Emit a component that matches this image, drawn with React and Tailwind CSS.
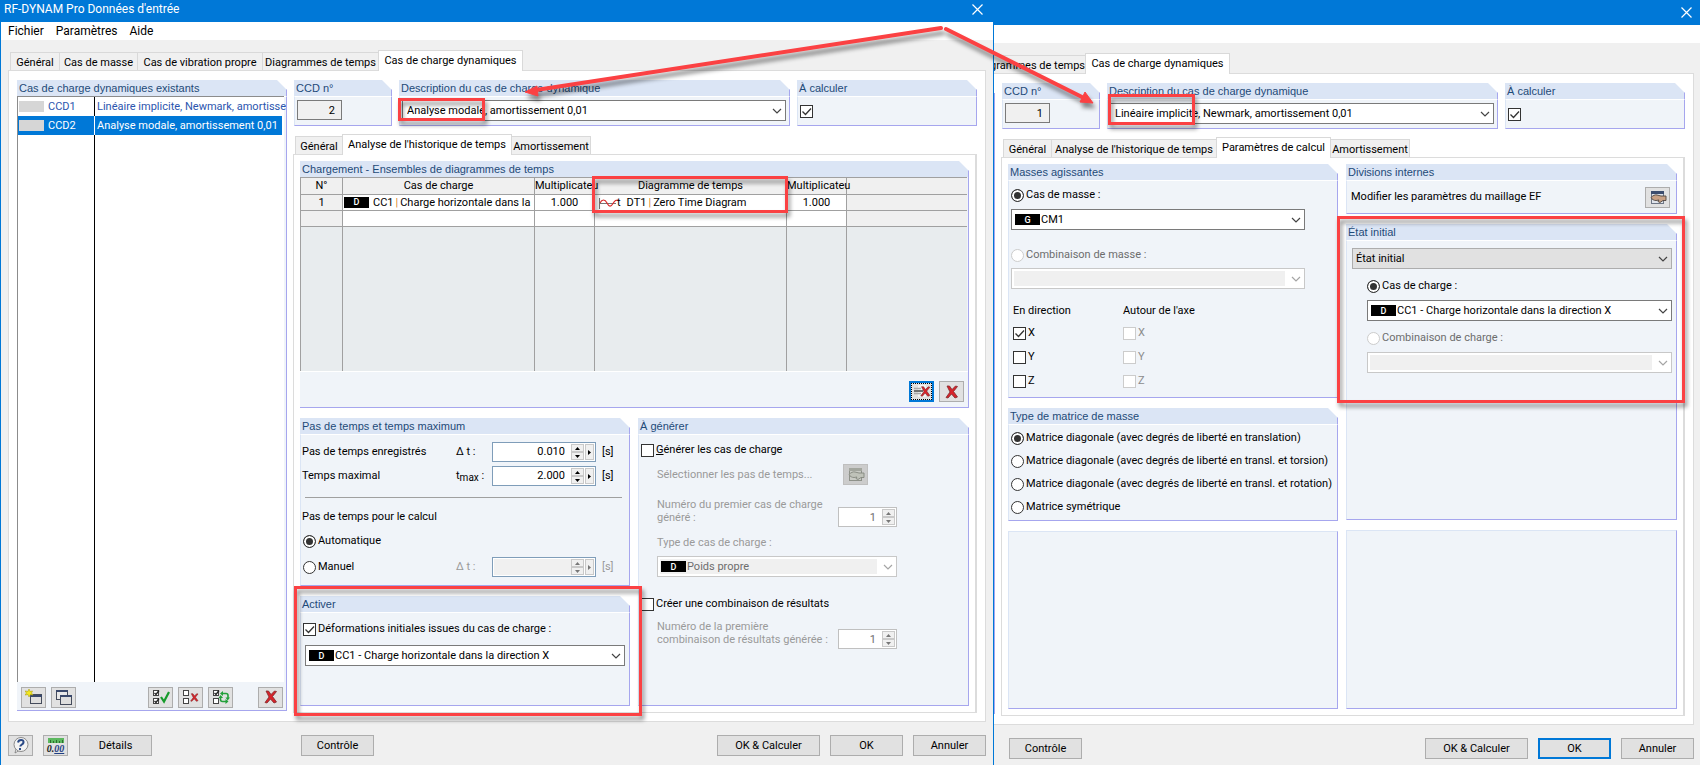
import React from "react";
import clsx from "clsx";

const CASES = [
    { id: "CCD1", label: "Linéaire implicite, Newmark, amortisse" },
    { id: "CCD2", label: "Analyse modale, amortissement 0,01", selected: true },
];

const MASS_MATRICES = [
    "Matrice diagonale (avec degrés de liberté en translation)",
    "Matrice diagonale (avec degrés de liberté en transl. et torsion)",
    "Matrice diagonale (avec degrés de liberté en transl. et rotation)",
    "Matrice symétrique",
];

/* ---------- Icons ---------- */

function RedCross({ x = 0, y = 0, size = 14 }) {
    return (
        <svg x={x} y={y} width={size} height={size} viewBox="0 0 14 14">
            <path d="M2 1L4.500 1L7 4.500L10.500 1L12.500 1.500L8.500 6.500L12.500 12L10 13L6.500 9L3 13L1 12.500L5 7Z" fill="#d8232a" stroke="#7d2a2c" strokeWidth=".8" />
        </svg>
    );
}

function MiniBox({ x, y, checked }) {
    return (
        <g>
            <rect x={x + 0.5} y={y + 0.5} width="5" height="5" fill="#fff" stroke="#444" />
            {checked && <path d={`M${x + 1.5} ${y + 3}l1.500 1.500l3-4`} fill="none" stroke="#222" strokeWidth="1.300" />}
        </g>
    );
}

function NewIcon() {
    return (
        <svg width="18" height="16" viewBox="0 0 18 16">
            <rect x="5.500" y="5.500" width="11" height="9" fill="#dedede" stroke="#444b5c" />
            <path d="M5 6h12v2H5z" fill="#39486b" />
            <path d="M4 0l1 2.500L7.500 2L6.500 4L8 6L5.500 5.500L4 8L3 5.500L0 6L1.500 4L0 2l3 .5z" fill="#f4e81c" stroke="#b1a410" strokeWidth=".6" />
        </svg>
    );
}

function CopyIcon() {
    return (
        <svg width="18" height="17" viewBox="0 0 18 17">
            <rect x="1.500" y="1.500" width="11" height="9" fill="#e8e8e8" stroke="#444b5c" />
            <path d="M1 1h12v2H1z" fill="#39486b" />
            <rect x="5.500" y="6.500" width="11" height="9" fill="#dedede" stroke="#444b5c" />
            <path d="M5 6h12v2H5z" fill="#39486b" />
        </svg>
    );
}

function CheckAllIcon() {
    return (
        <svg width="18" height="15" viewBox="0 0 18 15">
            <MiniBox x={1} y={0} checked />
            <MiniBox x={1} y={8} checked />
            <path d="M9 7l3 4.500L17 2" fill="none" stroke="#169b2b" strokeWidth="2.200" />
        </svg>
    );
}

function UncheckAllIcon() {
    return (
        <svg width="18" height="15" viewBox="0 0 18 15">
            <MiniBox x={1} y={0} />
            <MiniBox x={1} y={8} />
            <RedCross x={8} y={3} size={9} />
        </svg>
    );
}

function InvertIcon() {
    return (
        <svg width="18" height="15" viewBox="0 0 18 15">
            <MiniBox x={1} y={0} checked />
            <MiniBox x={1} y={8} />
            <path d="M10 3.500h4q2 0 2 2v3M14.500 11.500h-4q-2 0-2-2V7" fill="none" stroke="#23a03a" strokeWidth="1.600" />
            <path d="M13.500 7.500h4.500l-2.300 3zM6.500 8H11L8.700 5zM11 1v5L8 3.500zM13.500 9v5l3-2.500z" fill="#23a03a" />
        </svg>
    );
}

function DeleteRowIcon() {
    return (
        <svg width="18" height="15" viewBox="0 0 18 15">
            <path d="M5 1h8v12H5z" fill="#f4f4f4" />
            <path d="M1 4.500h7M1 9.500h7" stroke="#a9a9a9" strokeWidth="1.500" />
            <path d="M1 7h9" stroke="#6f6f6f" strokeWidth="2" />
            <RedCross x={7} y={2} size={11} />
        </svg>
    );
}

function EditIcon({ muted }) {
    return (
        <svg width="18" height="15" viewBox="0 0 18 15">
            <rect x="2.500" y="1.500" width="12" height="12" fill={muted ? "#c9cbc5" : "#dfe4ec"} stroke={muted ? "#8e918a" : "#6d7686"} />
            <path d="M2 1h13v3H2z" fill={muted ? "#a3a69e" : "#3c4d6e"} />
            <path
                d="M2 7.500C4 5.500 6 4.500 8 5l4 1h5v4.500h-3L11 12.500L9 11.500l1-1.500l-3 .5C5 10.500 3 9.500 2 7.500z"
                fill={muted ? "#bfc2b9" : "#c9a184"}
                stroke={muted ? "#85887f" : "#4f4640"}
                strokeWidth=".9"
            />
        </svg>
    );
}

function HelpIcon() {
    return (
        <svg width="18" height="17" viewBox="0 0 18 17">
            <path d="M4 12l-1 4l4-2.500z" fill="#fff" stroke="#777" strokeWidth=".8" />
            <circle cx="9" cy="7.500" r="7" fill="#f3f3f3" stroke="#8b8b8b" />
            <path d="M6 5.500C6.500 2 12 2 11.500 5.500C11.200 7.500 8.500 7.500 8.300 9.500M8 11v2" fill="none" stroke="#2b4a86" strokeWidth="2" />
        </svg>
    );
}

function DecimalsIcon() {
    return (
        <span className="flex flex-col items-center">
            <svg width="16" height="5" viewBox="0 0 16 5">
                <path d="M0 0h16v5H0z" fill="#5cb85f" />
                <path d="M2.500 2v3M5.500 3v2M8.500 2v3M11.500 3v2M14.500 2v3" stroke="#2c6e2f" />
            </svg>
            <span className="font-['Liberation_Serif',serif] text-[10px] font-bold italic leading-[11px] text-[#1c1c1c]">
                0.<span className="text-[#1f3f83] underline">00</span>
            </span>
        </span>
    );
}

function WaveIcon() {
    return (
        <svg width="21" height="12" viewBox="0 0 21 12" className="shrink-0">
            <path d="M1.500 1v11M1 6.500h17" stroke="#777" />
            <path d="M2 6C4 2 7 2 9 6S13 10 15 6.500S18 3 20 3" fill="none" stroke="#d92b2b" strokeWidth="1.200" />
        </svg>
    );
}

function Chevron({ muted }) {
    return (
        <svg
            width="10"
            height="6"
            viewBox="0 0 10 6"
            className={clsx("pointer-events-none absolute right-1 top-1/2 -translate-y-1/2", muted ? "text-[#a5a5a5]" : "text-[#444]")}
        >
            <path d="M1 1l4 4l4-4" fill="none" stroke="currentColor" strokeWidth="1.200" />
        </svg>
    );
}

/* ---------- Controls ---------- */

function Tab({ active, className, children }) {
    return (
        <button
            role="tab"
            aria-selected={!!active}
            className={clsx(
                "flex shrink-0 items-center justify-center whitespace-nowrap border border-b-0 border-[#d9d9d9]",
                active ? "z-1 -mx-px -mb-px h-[21px] bg-white pb-px" : "h-[18px] bg-[#f0f0f0] pt-0.5",
                className
            )}
        >
            {children}
        </button>
    );
}

function Group({ title, className, bodyClassName, children }) {
    return (
        <section className={clsx("relative flex flex-col", className)}>
            {title && (
                <h2 className="h-4 shrink-0 border-r border-[#a6a6ee] bg-[#dbe5f5] pl-0.5 font-['Liberation_Sans',Arial,sans-serif] text-[11px] leading-4 text-[#1e4a78] [clip-path:polygon(0_0,calc(100%-10px)_0,100%_10px,100%_100%,0_100%)]">
                    {title}
                </h2>
            )}
            <div
                className={clsx(
                    "flex flex-1 flex-col border border-b-[#a6a6ee] border-l-[#dbe5f5] border-r-[#a6a6ee] bg-[#f0f4f9]",
                    title ? "border-t-white" : "border-t-[#dbe5f5]",
                    bodyClassName
                )}
            >
                {children}
            </div>
        </section>
    );
}

function Badge({ children, className }) {
    return (
        <span className={clsx("flex h-[11px] w-[25px] shrink-0 items-center justify-center bg-black text-[9px] font-medium text-white", className)}>
            {children}
        </span>
    );
}

function Select({ label, value = "", badge, disabled, face, className }) {
    return (
        <div className={clsx("relative h-[21px]", className)}>
            <select
                aria-label={label}
                disabled={disabled}
                className={clsx(
                    "block h-full w-full appearance-none border pr-5",
                    badge ? "pl-[29px]" : "pl-[3px]",
                    disabled &&
                        "border-[#c8c8c8] bg-[#f0f0f0] text-[#6d6d6d] opacity-100 shadow-[inset_2px_0_0_white,inset_-19px_0_0_white,inset_0_2px_0_white,inset_0_-2px_0_white]",
                    !disabled && (face ? "border-[#adadad] bg-[#e1e1e1]" : "border-[#7a7a7a] bg-white")
                )}
            >
                <option>{value}</option>
            </select>
            {badge && <Badge className="pointer-events-none absolute left-1 top-[5px]">{badge}</Badge>}
            <Chevron muted={disabled} />
        </div>
    );
}

function Checkbox({ label, checked, disabled, ariaLabel, className }) {
    return (
        <label className={clsx("flex h-5 items-center gap-0.5 whitespace-nowrap", disabled && "text-[#8c8c8c]", className)}>
            <span className="relative flex">
                <input
                    type="checkbox"
                    defaultChecked={checked}
                    disabled={disabled}
                    aria-label={ariaLabel}
                    className="peer size-[13px] appearance-none border border-[#333] bg-white disabled:border-[#ccc]"
                />
                <svg
                    width="13"
                    height="13"
                    viewBox="0 0 13 13"
                    className="pointer-events-none absolute inset-0 hidden peer-checked:block"
                >
                    <path d="M2.500 6.500l3 3l5.500-6" fill="none" stroke="#333" strokeWidth="1.300" />
                </svg>
            </span>
            <span>{label}</span>
        </label>
    );
}

function Radio({ name, label, checked, disabled, className }) {
    return (
        <label className={clsx("flex h-5 items-center gap-0.5 whitespace-nowrap", disabled && "text-[#6d6d6d]", className)}>
            <input
                type="radio"
                name={name}
                defaultChecked={checked}
                disabled={disabled}
                className="size-[13px] appearance-none rounded-full border border-[#333] bg-white checked:bg-[#333] checked:shadow-[inset_0_0_0_2px_white] disabled:border-[#ccc]"
            />
            {label}
        </label>
    );
}

function SpinArrows({ muted }) {
    const face = "flex w-[13px] flex-1 items-center justify-center border border-[#c9c9c9] bg-[#f0f0f0]";
    return (
        <span className={clsx("flex w-[13px] flex-col", muted ? "text-[#777]" : "text-black")}>
            <button aria-label="Augmenter" disabled={muted} className={face}>
                <svg width="5" height="3" viewBox="0 0 5 3"><path d="M0 3h5L2.500 0z" fill="currentColor" /></svg>
            </button>
            <button aria-label="Diminuer" disabled={muted} className={face}>
                <svg width="5" height="3" viewBox="0 0 5 3"><path d="M0 0h5L2.500 3z" fill="currentColor" /></svg>
            </button>
        </span>
    );
}

function NumberField({ label, value, disabled, more, className }) {
    return (
        <div
            className={clsx(
                "flex h-5 shrink-0 border bg-white p-px",
                more ? "w-[104px] border-[#7f9db9]" : "w-[59px] border-[#c0c0c0]",
                className
            )}
        >
            <input
                aria-label={label}
                defaultValue={value}
                disabled={disabled}
                className={clsx(
                    "min-w-0 flex-1 pr-1.5 text-right",
                    disabled && "text-[#6d6d6d]",
                    disabled && more && "bg-[#f0f0f0]"
                )}
            />
            <SpinArrows muted={disabled} />
            {more && (
                <button
                    aria-label={`${label} : valeurs`}
                    disabled={disabled}
                    className={clsx(
                        "ml-px flex w-[9px] items-center justify-center border border-[#c9c9c9] bg-[#f0f0f0]",
                        disabled && "text-[#777]"
                    )}
                >
                    <svg width="3" height="5" viewBox="0 0 3 5"><path d="M0 0v5L3 2.500z" fill="currentColor" /></svg>
                </button>
            )}
        </div>
    );
}

function IconButton({ label, focused, disabled, className, children }) {
    return (
        <button
            aria-label={label}
            disabled={disabled}
            className={clsx(
                "flex h-[21px] w-[25px] shrink-0 items-center justify-center",
                focused && "border-2 border-[#0078d7] bg-[#e1e1e1] outline-1 -outline-offset-3 outline-dotted outline-black",
                !focused && (disabled ? "border border-[#bfbfbf] bg-[#cccccc]" : "border border-[#adadad] bg-[#e1e1e1]"),
                className
            )}
        >
            {children}
        </button>
    );
}

function PushButton({ primary, className, children }) {
    return (
        <button
            className={clsx(
                "h-[21px] shrink-0 bg-[#e1e1e1]",
                primary ? "border-2 border-[#0078d7]" : "border border-[#adadad]",
                className || "w-[73px]"
            )}
        >
            {children}
        </button>
    );
}

function Highlight({ className }) {
    return (
        <span
            className={clsx(
                "pointer-events-none absolute z-20 border-3 border-[#fb4143] drop-shadow-[2px_4px_2px_rgba(0,0,0,0.45)]",
                className
            )}
        />
    );
}

function CloseButton({ className }) {
    return (
        <button aria-label="Fermer" className={className}>
            <svg width="11" height="11" viewBox="0 0 11 11">
                <path d="M.5 .5l10 10M10.500 .5l-10 10" stroke="#fff" strokeWidth="1.200" />
            </svg>
        </button>
    );
}

/* ---------- Shared header row of both dialogs ---------- */

function CaseHeader({ number, description, highlight }) {
    return (
        <div className="ml-px flex gap-[7px]">
            <Group title="CCD n°" className="w-[98px]" bodyClassName="min-h-[30px] pl-0.5 pt-[3px]">
                <input
                    aria-label="CCD n°"
                    readOnly
                    value={number}
                    className="h-5 w-[45px] border border-[#7a7a7a] bg-[#f0f0f0] pr-1.5 text-right"
                />
            </Group>
            <Group title="Description du cas de charge dynamique" className="flex-1" bodyClassName="pl-0.5 pr-[3px] pt-[3px]">
                <Select label="Description du cas de charge dynamique" value={description} className="[&>select]:pl-1" />
                <Highlight className={highlight} />
            </Group>
            <Group title="À calculer" className="w-[180px]" bodyClassName="pl-0.5 pt-1">
                <Checkbox ariaLabel="À calculer" checked />
            </Group>
        </div>
    );
}

/* ---------- Left dialog ---------- */

function CaseList() {
    return (
        <Group title="Cas de charge dynamiques existants" className="mb-0.5 w-[270px] shrink-0" bodyClassName="border-l-0!">
            <div className="-mt-px mr-0.5 flex flex-1 flex-col border-l border-t border-[#8c8c8c] bg-white">
                {CASES.map((c) => (
                    <button
                        key={c.id}
                        className={clsx("mr-0.5 grid h-[19px] grid-cols-[77px_1fr] text-left", c.selected ? "bg-[#0078d7] text-white" : "text-[#2b55ae]")}
                    >
                        <span className={clsx("flex h-full items-center gap-1 border-r pl-px", c.selected ? "border-white" : "border-black")}>
                            <span className="h-[11px] w-[25px] bg-[#d6d6d6]" />
                            {c.id}
                        </span>
                        <span className="-mr-1 self-center overflow-hidden whitespace-nowrap pl-0.5">{c.label}</span>
                    </button>
                ))}
                <div className="w-[77px] flex-1 border-r border-black" />
            </div>
            <div className="flex h-7 items-center gap-[5px] pl-1 pr-[3px] pt-0.5">
                <IconButton label="Nouveau"><NewIcon /></IconButton>
                <IconButton label="Copier"><CopyIcon /></IconButton>
                <IconButton label="Tout sélectionner" className="ml-auto"><CheckAllIcon /></IconButton>
                <IconButton label="Tout désélectionner"><UncheckAllIcon /></IconButton>
                <IconButton label="Inverser la sélection"><InvertIcon /></IconButton>
                <IconButton label="Supprimer" className="ml-5"><RedCross /></IconButton>
            </div>
        </Group>
    );
}

function LoadTable() {
    const th = "border-b border-r border-[#a0a0a0] bg-[#f0f0f0] p-0 font-normal whitespace-nowrap";
    const td = "border-b border-r border-[#a0a0a0] bg-white p-0 text-center whitespace-nowrap";
    const fill = "border-r border-[#a0a0a0] bg-[#e8ecee] p-0";
    return (
        <Group title="Chargement - Ensembles de diagrammes de temps" bodyClassName="border-l-0! border-t-0!">
            <div className="relative mr-px">
                <table className="w-full table-fixed border-separate border-spacing-0 border-l border-t border-[#a0a0a0]">
                    <colgroup>
                        <col className="w-[42px]" />
                        <col className="w-[192px]" />
                        <col className="w-[60px]" />
                        <col className="w-[192px]" />
                        <col className="w-[60px]" />
                        <col />
                    </colgroup>
                    <thead>
                        <tr className="h-[17px] leading-4">
                            <th className={th}>N°</th>
                            <th className={th}>Cas de charge</th>
                            <th className={th}>Multiplicateu</th>
                            <th className={th}>Diagramme de temps</th>
                            <th className={th}>Multiplicateu</th>
                            <th className={clsx(th, "border-r-0")} />
                        </tr>
                    </thead>
                    <tbody className="leading-[15px]">
                        <tr className="h-4">
                            <td className={clsx(td, "bg-[#f0f0f0]!")}>1</td>
                            <td className={td}>
                                <span className="flex items-center pl-px">
                                    <Badge className="mr-1">D</Badge>CC1<span className="px-0.5 text-[#d9822b]">|</span>Charge horizontale dans la
                                </span>
                            </td>
                            <td className={td}>1.000</td>
                            <td className={td}>
                                <span className="flex items-center pl-[3px]">
                                    <WaveIcon />
                                    <span className="-ml-0.5 mr-1.5">t</span>DT1<span className="px-0.5 text-[#d9822b]">|</span>Zero Time Diagram
                                </span>
                            </td>
                            <td className={td}>1.000</td>
                            <td className={clsx(td, "border-r-0 bg-[#f0f0f0]!")} />
                        </tr>
                        <tr className="h-4">
                            <td className={clsx(td, "bg-[#f0f0f0]!")} />
                            <td className={td} />
                            <td className={td} />
                            <td className={td} />
                            <td className={td} />
                            <td className={clsx(td, "border-r-0 bg-[#f0f0f0]!")} />
                        </tr>
                        <tr className="h-[144px]">
                            <td className={fill} />
                            <td className={fill} />
                            <td className={fill} />
                            <td className={fill} />
                            <td className={fill} />
                            <td className={clsx(fill, "border-r-0")} />
                        </tr>
                    </tbody>
                </table>
                <Highlight className="left-[292px] -top-px h-[37px] w-[196px]" />
            </div>
            <div className="flex h-9 items-center justify-end gap-[5px] border-t border-white pb-1 pr-1 pt-2">
                <IconButton label="Supprimer la ligne" focused><DeleteRowIcon /></IconButton>
                <IconButton label="Tout supprimer"><RedCross /></IconButton>
            </div>
        </Group>
    );
}

function TimeRow({ label, symbol, value, disabled, className }) {
    return (
        <div className={clsx("flex h-5 items-center", className)}>
            <span className="flex-1">{label}</span>
            <span className={clsx("w-9 shrink-0", disabled && "text-[#9a9a9a]")}>{symbol}</span>
            <NumberField label={typeof label === "string" ? label : "Pas de temps"} value={value} disabled={disabled} more />
            <span className={clsx("w-[33px] shrink-0 pl-1.5", disabled && "text-[#9a9a9a]")}>[s]</span>
        </div>
    );
}

function TimeSteps() {
    return (
        <Group title="Pas de temps et temps maximum" bodyClassName="pb-2 pl-px pt-[7px]">
            <TimeRow label="Pas de temps enregistrés" symbol="Δ t :" value="0.010" />
            <TimeRow
                label="Temps maximal"
                symbol={<>t<sub className="bottom-[-2px] text-[10px]">max</sub> :</>}
                value="2.000"
                className="mt-1"
            />
            <hr className="ml-[3px] mr-[7px] mt-[11px] border-[#a0a0a0]" />
            <div className="mt-[9px] h-5 leading-5">Pas de temps pour le calcul</div>
            <Radio name="step" label="Automatique" checked className="ml-px mt-1" />
            <TimeRow label={<Radio name="step" label="Manuel" className="ml-px" />} symbol="Δ t :" disabled className="mt-1.5" />
        </Group>
    );
}

function Generate() {
    return (
        <Group title="À générer" bodyClassName="pl-0.5 pt-[5px]">
            <Checkbox label={<><u>G</u>énérer les cas de charge</>} />
            <div className="mb-[17px] ml-4 flex w-60 flex-col text-[#9a9a9a]">
                <div className="mt-1 flex h-[21px] items-center justify-between pr-[29px]">
                    Sélectionner les pas de temps...
                    <IconButton label="Sélectionner les pas de temps" disabled><EditIcon muted /></IconButton>
                </div>
                <div className="mt-[13px] flex h-[29px] justify-between leading-[13px]">
                    <span>Numéro du premier cas de charge<br />généré :</span>
                    <NumberField label="Numéro du premier cas de charge généré" value="1" disabled className="self-end" />
                </div>
                <div className="mt-1.5 h-5 leading-5">Type de cas de charge :</div>
                <Select label="Type de cas de charge" value="Poids propre" badge="D" disabled className="mt-[3px]" />
            </div>
            <Checkbox label="Créer une combinaison de résultats" />
            <div className="ml-4 mt-1.5 flex h-[29px] w-60 justify-between whitespace-nowrap leading-[13px] text-[#9a9a9a]">
                <span>Numéro de la première<br />combinaison de résultats générée :</span>
                <NumberField label="Numéro de la première combinaison de résultats générée" value="1" disabled className="self-end" />
            </div>
        </Group>
    );
}

function Activate() {
    return (
        <Group title="Activer" className="h-[110px]" bodyClassName="pl-0.5 pt-1.5">
            <Checkbox label="Déformations initiales issues du cas de charge :" checked />
            <Select label="Cas de charge initial" value="CC1 - Charge horizontale dans la direction X" badge="D" className="ml-0.5 mr-1 mt-1.5" />
            <Highlight className="-bottom-2.5 -left-1.5 -right-3 -top-2.5" />
        </Group>
    );
}

function LeftDialog() {
    return (
        <div className="flex flex-col border-l border-[#0078d7] bg-[#f0f0f0]">
            <header className="flex h-[22px] items-center justify-between bg-[#0078d7] pb-1 pl-[3px] pr-2.5 text-[12px] text-white">
                RF-DYNAM Pro Données d'entrée
                <CloseButton />
            </header>
            <nav className="flex h-[18px] items-center gap-3 bg-white pl-[7px] text-[12px]">
                <button>Fichier</button>
                <button>Paramètres</button>
                <button>Aide</button>
            </nav>
            <div role="tablist" className="mt-2.5 flex h-5 items-end pl-[9px]">
                <Tab className="w-[49px] border-r-0">Général</Tab>
                <Tab className="w-[78px] border-r-0">Cas de masse</Tab>
                <Tab className="w-[125px] border-r-0">Cas de vibration propre</Tab>
                <Tab className="w-[117px]">Diagrammes de temps</Tab>
                <Tab active className="w-[145px]">Cas de charge dynamiques</Tab>
            </div>
            <main className="ml-[7px] mr-[7px] flex flex-1 gap-1.5 border border-[#dcdcdc] bg-white px-2 pb-2 pt-[9px]">
                <CaseList />
                <div className="flex min-w-0 flex-1 flex-col">
                    <CaseHeader
                        number="2"
                        description="Analyse modale, amortissement 0,01"
                        highlight="-left-px top-[18px] h-[23px] w-[87px]"
                    />
                    <div role="tablist" className="mt-2 flex h-5 items-end pl-0.5">
                        <Tab className="w-[48px]">Général</Tab>
                        <Tab active className="w-[170px]">Analyse de l'historique de temps</Tab>
                        <Tab className="w-[80px]">Amortissement</Tab>
                    </div>
                    <div className="flex flex-1 flex-col gap-2.5 border border-r-2 border-[#dcdcdc] bg-white p-1.5">
                        <LoadTable />
                        <div className="grid flex-1 grid-cols-[minmax(0,330fr)_minmax(0,331fr)] gap-2">
                            <div className="z-10 flex flex-col gap-2.5">
                                <TimeSteps />
                                <Activate />
                            </div>
                            <Generate />
                        </div>
                    </div>
                </div>
            </main>
            <footer className="flex items-center pb-[9px] pl-[7px] pr-[7px] pt-[13px]">
                <IconButton label="Aide"><HelpIcon /></IconButton>
                <IconButton label="Unités et décimales" className="ml-2.5"><DecimalsIcon /></IconButton>
                <PushButton className="ml-[11px] w-[73px]">Détails</PushButton>
                <PushButton className="ml-[149px] w-[73px]">Contrôle</PushButton>
                <div className="ml-auto flex gap-[10px]">
                    <PushButton className="w-[103px]">OK & Calculer</PushButton>
                    <PushButton>OK</PushButton>
                    <PushButton>Annuler</PushButton>
                </div>
            </footer>
        </div>
    );
}

/* ---------- Right dialog ---------- */

function ActingMasses() {
    return (
        <Group title="Masses agissantes" className="h-[234px]" bodyClassName="pl-0.5 pr-8 pt-1">
            <Radio name="mass" label="Cas de masse :" checked />
            <Select label="Cas de masse" value="CM1" badge="G" className="mt-1" />
            <Radio name="mass" label="Combinaison de masse :" disabled className="mt-[15px]" />
            <Select label="Combinaison de masse" disabled className="mt-[3px]" />
            <div className="mt-3 grid w-[222px] grid-cols-2 gap-y-1 pl-0.5">
                <span className="h-[18px] leading-5">En direction</span>
                <span className="h-[18px] whitespace-nowrap leading-5">Autour de l'axe</span>
                <Checkbox label="X" checked />
                <Checkbox label="X" disabled />
                <Checkbox label="Y" />
                <Checkbox label="Y" disabled />
                <Checkbox label="Z" />
                <Checkbox label="Z" disabled />
            </div>
        </Group>
    );
}

function InitialState() {
    return (
        <Group title="État initial" className="flex-1" bodyClassName="pl-[5px] pr-1 pt-[7px]">
            <Select label="État initial" value="État initial" face />
            <div className="ml-[15px] flex flex-col">
                <Radio name="init" label="Cas de charge :" checked className="mt-[7px]" />
                <Select label="Cas de charge" value="CC1 - Charge horizontale dans la direction X" badge="D" className="mt-1" />
                <Radio name="init" label="Combinaison de charge :" disabled className="mt-[7px]" />
                <Select label="Combinaison de charge" disabled className="mt-1" />
            </div>
            <Highlight className="-left-[9px] -right-2 -top-2 h-[187px]" />
        </Group>
    );
}

function RightDialog() {
    return (
        <div className="flex min-w-0 flex-col overflow-hidden border-l border-[#0078d7] bg-[#f0f0f0]">
            <header className="flex h-[25px] items-center justify-end bg-[#0078d7] pr-2">
                <CloseButton />
            </header>
            <div className="h-[18px] bg-white" />
            <div role="tablist" className="mt-2.5 flex h-5 items-end">
                <Tab className="w-[92px] justify-end! border-x-0 pr-px">grammes de temps</Tab>
                <Tab active className="w-[145px]">Cas de charge dynamiques</Tab>
            </div>
            <main className="mr-1.5 flex flex-1 gap-1.5 border border-l-0 border-[#dcdcdc] bg-white pb-2 pr-2 pt-[9px]">
                <div className="mb-0.5 mt-2.5 w-px bg-[#a6a6ee]" />
                <div className="flex min-w-0 flex-1 flex-col">
                    <CaseHeader
                        number="1"
                        description="Linéaire implicite, Newmark, amortissement 0,01"
                        highlight="left-px top-[11px] h-[31px] w-[87px]"
                    />
                    <div role="tablist" className="mt-2 flex h-5 items-end pl-0.5">
                        <Tab className="w-[48px] border-r-0">Général</Tab>
                        <Tab className="w-[166px]">Analyse de l'historique de temps</Tab>
                        <Tab active className="w-[115px]">Paramètres de calcul</Tab>
                        <Tab className="w-[80px]">Amortissement</Tab>
                    </div>
                    <div className="grid flex-1 grid-cols-[minmax(0,330fr)_minmax(0,331fr)] gap-2 border border-r-2 border-[#dcdcdc] bg-white p-1.5">
                        <div className="flex flex-col gap-2.5">
                            <ActingMasses />
                            <Group title="Type de matrice de masse" bodyClassName="gap-[3px] pb-[3px] pl-0.5 pt-[3px]">
                                {MASS_MATRICES.map((m, i) => (
                                    <Radio key={m} name="matrix" label={m} checked={i === 0} />
                                ))}
                            </Group>
                            <Group className="flex-1" />
                        </div>
                        <div className="flex flex-col gap-2.5">
                            <Group title="Divisions internes" className="h-[50px]" bodyClassName="pl-1 pr-1.5">
                                <div className="flex h-full items-center justify-between">
                                    Modifier les paramètres du maillage EF
                                    <IconButton label="Modifier le maillage"><EditIcon /></IconButton>
                                </div>
                            </Group>
                            <InitialState />
                            <Group className="h-[179px]" />
                        </div>
                    </div>
                </div>
            </main>
            <footer className="flex justify-between pb-1.5 pl-[15px] pr-1.5 pt-[13px]">
                <PushButton>Contrôle</PushButton>
                <div className="flex gap-[10px]">
                    <PushButton className="w-[103px]">OK & Calculer</PushButton>
                    <PushButton primary>OK</PushButton>
                    <PushButton>Annuler</PushButton>
                </div>
            </footer>
        </div>
    );
}

function Arrows() {
    return (
        <svg
            width="1120"
            height="130"
            viewBox="0 0 1120 130"
            className="pointer-events-none absolute left-0 top-0 z-30 drop-shadow-[2px_5px_2px_rgba(0,0,0,0.45)]"
        >
            <g fill="#fb4143" stroke="#fb4143">
                <path d="M941 28L536 90M946 29L1084 98" strokeWidth="4" strokeLinecap="round" />
                <path d="M525 92L537 86L538 96ZM1093 103L1080 102L1085 92Z" strokeWidth="1" />
            </g>
        </svg>
    );
}

export default function App() {
    return (
        <div className="relative grid min-h-screen min-w-[1500px] grid-cols-[993fr_707fr] font-[Roboto,Tahoma,'DejaVu_Sans_Condensed',sans-serif] text-[11px] leading-4 text-black">
            <LeftDialog />
            <RightDialog />
            <Arrows />
        </div>
    );
}
